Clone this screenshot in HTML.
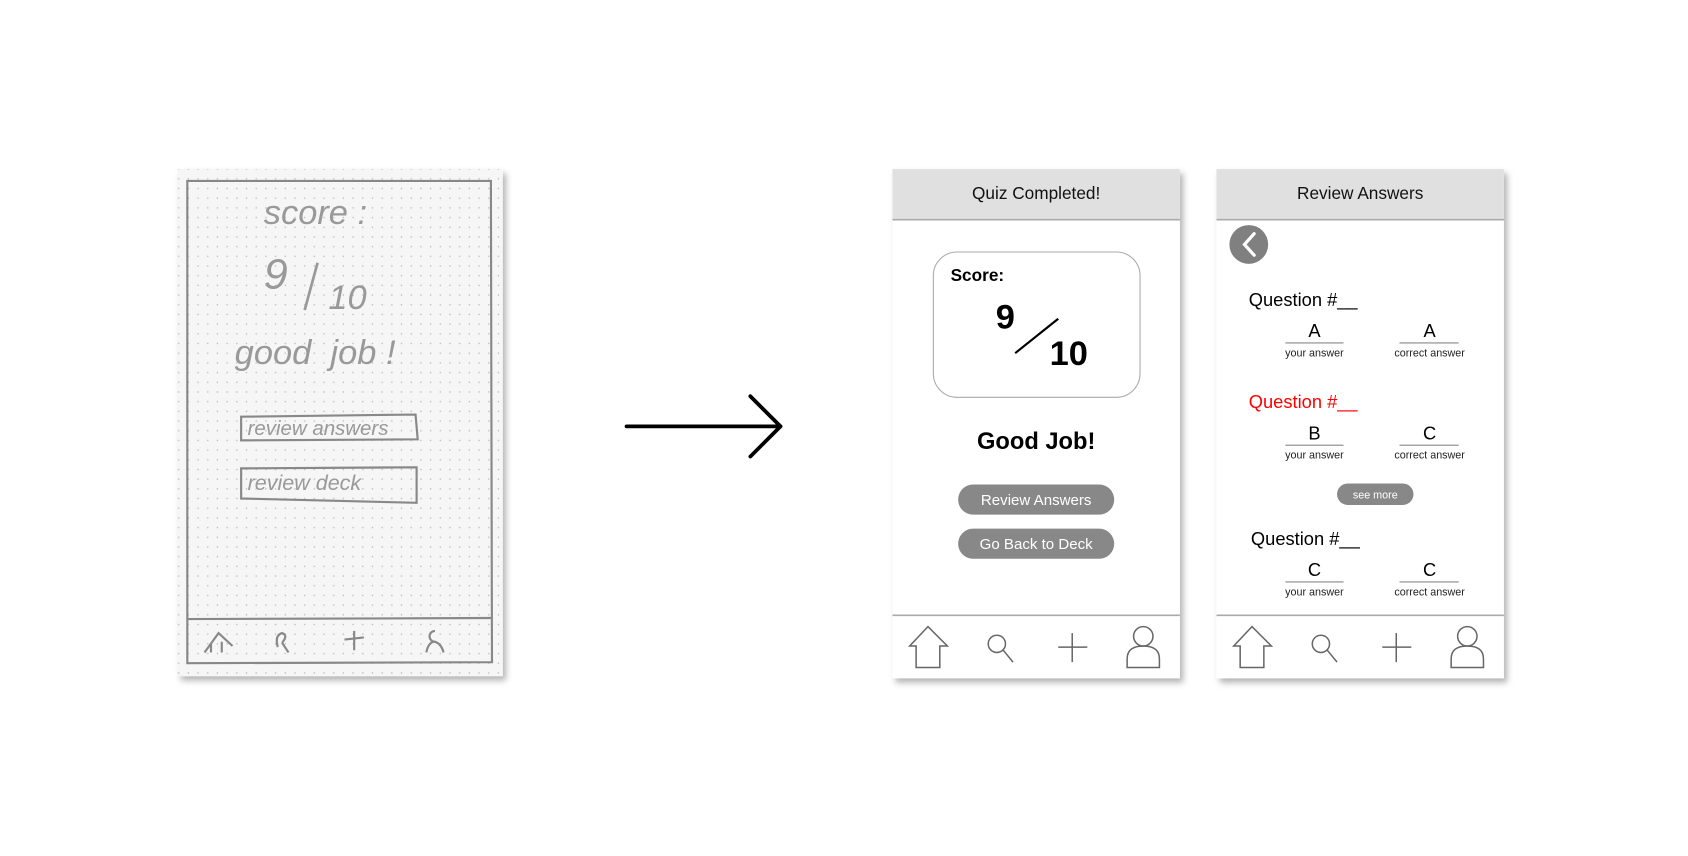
<!DOCTYPE html>
<html><head><meta charset="utf-8"><style>
html,body{margin:0;padding:0;background:#fff;width:1688px;height:856px;overflow:hidden}
svg{display:block}
text{font-family:"Liberation Sans",sans-serif}
</style></head><body>
<svg width="1688" height="856" viewBox="0 0 1568 795" xmlns="http://www.w3.org/2000/svg">
<defs>
<filter id="sh" x="-10%" y="-10%" width="125%" height="125%"><feDropShadow dx="3" dy="4" stdDeviation="3" flood-color="#000" flood-opacity="0.3"/></filter>
<pattern id="dots" width="9" height="9" patternUnits="userSpaceOnUse"><circle cx="4" cy="4" r="0.7" fill="#bbb"/></pattern>
<g id="nav" fill="none" stroke="#666" stroke-width="1.4">
<path d="M33,425 L16,443 L22,443 L22,463 L44,463 L44,443 L51,443 Z"/>
<circle cx="97" cy="441" r="8"/><line x1="103" y1="447" x2="112" y2="458"/>
<line x1="154" y1="444" x2="181" y2="444"/><line x1="167" y1="431" x2="167" y2="458"/>
<circle cx="233" cy="434" r="9"/>
<path d="M218,463 L218,455 Q218,443 233,443 Q248,443 248,455 L248,463 Z"/>
</g>
</defs>
<!-- sketch -->
<g filter="url(#sh)"><rect x="165" y="157" width="302" height="471" fill="#f6f6f6"/></g>
<rect x="165" y="157" width="302" height="471" fill="url(#dots)"/>
<g fill="none" stroke="#888" stroke-width="2">
<path d="M174,168 L456,168 L457,615 L174,616 Z"/>
<line x1="174" y1="575" x2="456" y2="574"/>
<path d="M224,387 L386,385 L388,408 L224,409 Z"/>
<path d="M224,435 L387,434 L387,467 L224,463 Z"/>
<path d="M258,601 Q255,590 262,588 Q268,590 262,597 M262,597 L268,606"/>
<path d="M320,594 L338,592 M329,586 L329,604"/>
<path d="M396,606 Q398,596 404,596 Q410,598 412,606 M404,596 A4,4 0 1,1 404,586"/>
<path d="M190,606 L203,588 L216,600 M196,598 L196,606 M206,596 L206,606"/>
</g>
<g fill="#999" font-family="'Liberation Serif',serif" font-style="italic">
<text x="245" y="208" font-size="32">score :</text>
<text x="245" y="268" font-size="40">9</text>
<line x1="295" y1="244" x2="283" y2="288" stroke="#999" stroke-width="2.5"/>
<text x="305" y="287" font-size="32">10</text>
<text x="218" y="338" font-size="32">good &#160;job !</text>
<text x="230" y="404" font-size="19">review answers</text>
<text x="230" y="455" font-size="20">review deck</text>
</g>
<!-- arrow -->
<g fill="none" stroke="#000" stroke-width="3.5" stroke-linecap="round" stroke-linejoin="round">
<line x1="582" y1="396" x2="725" y2="396"/><path d="M697,368 L725,396 L697,424"/>
</g>
<!-- phone 1 -->
<g filter="url(#sh)"><rect x="829" y="157" width="267" height="473" fill="#fff"/></g>
<rect x="829" y="157" width="267" height="47" fill="#e0e0e0"/>
<line x1="829" y1="204" x2="1096" y2="204" stroke="#aaa" stroke-width="1.5"/>
<text x="962.5" y="185" font-size="16" text-anchor="middle" fill="#111">Quiz Completed!</text>
<rect x="867" y="234" width="192" height="135" rx="22" fill="#fff" stroke="#aaa" stroke-width="1"/>
<text x="883" y="261" font-size="16" font-weight="bold">Score:</text>
<text x="925" y="305" font-size="32" font-weight="bold">9</text>
<line x1="943" y1="328" x2="983" y2="296" stroke="#000" stroke-width="2"/>
<text x="975" y="339" font-size="32" font-weight="bold">10</text>
<text x="962.5" y="417" font-size="22" font-weight="bold" text-anchor="middle">Good Job!</text>
<rect x="890" y="450" width="145" height="28" rx="14" fill="#888"/>
<text x="962.5" y="469" font-size="14" text-anchor="middle" fill="#fff">Review Answers</text>
<rect x="890" y="491" width="145" height="28" rx="14" fill="#888"/>
<text x="962.5" y="510" font-size="14" text-anchor="middle" fill="#fff">Go Back to Deck</text>
<line x1="829" y1="571.5" x2="1096" y2="571.5" stroke="#aaa" stroke-width="1.5"/>
<use href="#nav" x="829" y="157"/>
<!-- phone 2 -->
<g filter="url(#sh)"><rect x="1130" y="157" width="267" height="473" fill="#fff"/></g>
<rect x="1130" y="157" width="267" height="47" fill="#e0e0e0"/>
<line x1="1130" y1="204" x2="1397" y2="204" stroke="#aaa" stroke-width="1.5"/>
<text x="1263.5" y="185" font-size="16" text-anchor="middle" fill="#111">Review Answers</text>
<circle cx="1160" cy="227" r="18" fill="#808080"/>
<path d="M1165,217 L1156,227 L1165,237" fill="none" stroke="#fff" stroke-width="3" stroke-linecap="round"/>
<g font-size="17">
<text x="1160" y="284">Question #__</text>
<text x="1160" y="379" fill="#f00">Question #__</text>
<text x="1162" y="506">Question #__</text>
</g>
<g font-size="17" text-anchor="middle">
<text x="1221" y="313">A</text><text x="1328" y="313">A</text>
<text x="1221" y="408">B</text><text x="1328" y="408">C</text>
<text x="1221" y="535">C</text><text x="1328" y="535">C</text>
</g>
<g stroke="#888" stroke-width="1">
<line x1="1194" y1="318.5" x2="1248" y2="318.5"/><line x1="1300" y1="318.5" x2="1355" y2="318.5"/>
<line x1="1194" y1="413.5" x2="1248" y2="413.5"/><line x1="1300" y1="413.5" x2="1355" y2="413.5"/>
<line x1="1194" y1="540.5" x2="1248" y2="540.5"/><line x1="1300" y1="540.5" x2="1355" y2="540.5"/>
</g>
<g font-size="10" text-anchor="middle" fill="#222">
<text x="1221" y="331">your answer</text><text x="1328" y="331">correct answer</text>
<text x="1221" y="426">your answer</text><text x="1328" y="426">correct answer</text>
<text x="1221" y="553">your answer</text><text x="1328" y="553">correct answer</text>
</g>
<rect x="1242" y="449" width="71" height="20" rx="10" fill="#888"/>
<text x="1277.5" y="463" font-size="10" text-anchor="middle" fill="#fff">see more</text>
<line x1="1130" y1="571.5" x2="1397" y2="571.5" stroke="#aaa" stroke-width="1.5"/>
<use href="#nav" x="1130" y="157"/>
</svg>
</body></html>
